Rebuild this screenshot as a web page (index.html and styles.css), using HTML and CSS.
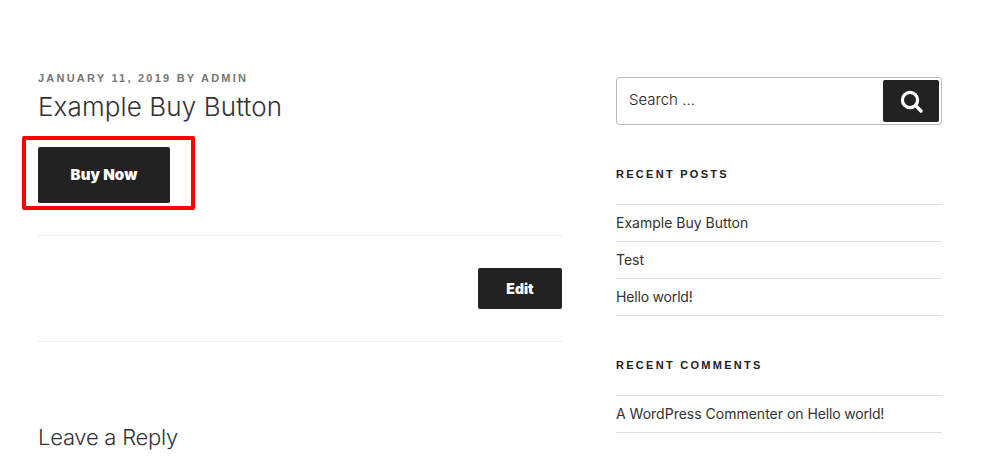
FILE: index.html
```
<!DOCTYPE html>
<html lang="en">
<head>
<meta charset="utf-8">
<title>Example Buy Button</title>
<link rel="stylesheet" href="styles.css">
</head>
<body>
<div class="page">
  <main class="main">
    <div class="meta">JANUARY 11, 2019 BY ADMIN</div>
    <h1 class="title">Example Buy Button</h1>
    <div class="buy-wrap"><a class="btn buy">Buy Now</a></div>
    <div class="edit-row"><a class="btn edit">Edit</a></div>
    <h2 class="reply">Leave a Reply</h2>
  </main>
  <aside class="side">
    <form class="search">
      <span class="search-text">Search …</span>
      <span class="search-btn">
        <svg width="23" height="23" viewBox="0 0 23 23"><circle cx="10" cy="10" r="7.6" fill="none" stroke="#fff" stroke-width="3.2"/><path d="M15.5 15.5L21 21" stroke="#fff" stroke-width="3.4" stroke-linecap="round"/></svg>
      </span>
    </form>
    <h3 class="w-title first">RECENT POSTS</h3>
    <ul class="list">
      <li>Example Buy Button</li>
      <li>Test</li>
      <li><span class="hello">Hello world!</span></li>
    </ul>
    <h3 class="w-title second">RECENT COMMENTS</h3>
    <ul class="list">
      <li>A WordPress Commenter <span class="on">on</span> <span class="hello">Hello world!</span></li>
    </ul>
  </aside>
</div>
</body>
</html>
```
FILE: styles.css
```
*, *::before { box-sizing: border-box; }
html, body { margin: 0; padding: 0; background: #fff; height: 100%; overflow: hidden; }
body { font-family: Inter, "Liberation Sans", sans-serif; color: #333; }
.page { display: flex; padding: 0 62px 0 38px; gap: 54px; }
.main { width: 524px; padding-top: 71px; }
.meta { font-family: "Liberation Sans", Arial, sans-serif; font-size: 11px; font-weight: 700; letter-spacing: 2.22px; color: #767676; line-height: 14px; }
.title { margin: 6px 0 0; font-size: 26px; font-weight: 300; letter-spacing: 0.12px; line-height: 32px; color: #333; }
.buy-wrap { position: relative; margin-top: 24px; padding-bottom: 32px; border-bottom: 1px solid #eee; }
.buy-wrap::before { content: ""; position: absolute; left: -16px; top: -11px; width: 173px; height: 74px; border: 4px solid #f00; border-radius: 2px; }
.btn { display: flex; align-items: center; justify-content: center; background: #222; color: #fff; font-weight: 900; border-radius: 2px; }
.buy { width: 132px; height: 56px; font-size: 15px; padding-bottom: 2px; letter-spacing: 0.1px; }
.edit-row { display: flex; justify-content: flex-end; padding: 32px 0; border-bottom: 1px solid #eee; }
.edit { width: 84px; height: 41px; font-size: 14px; padding-bottom: 1px; }
.reply { margin: 80px 0 0; font-size: 22px; font-weight: 300; letter-spacing: -0.25px; line-height: 30px; color: #333; }
.side { width: 326px; padding-top: 77px; }
.search { display: flex; justify-content: space-between; align-items: center; height: 48px; border: 1px solid #bbb; border-radius: 3px; padding: 2px; }
.search-text { padding-left: 10px; font-size: 15px; font-weight: 300; color: #222; margin-top: -3px; }
.search-btn { display: flex; align-items: center; justify-content: center; width: 56px; height: 42px; background: #222; border-radius: 2px; }
.w-title { margin: 0; font-family: "Liberation Sans", Arial, sans-serif; font-size: 11px; font-weight: 700; letter-spacing: 2.28px; line-height: 14px; color: #222; }
.first { margin-top: 42px; }
.second { margin-top: 42px; }
.list { list-style: none; margin: 23px 0 0; padding: 0; border-top: 1px solid #ddd; }
.list li { height: 37px; line-height: 36px; font-size: 14px; color: #333; border-bottom: 1px solid #ddd; white-space: nowrap; }
.hello { letter-spacing: -0.18px; }
.on { color: #333; }
```
